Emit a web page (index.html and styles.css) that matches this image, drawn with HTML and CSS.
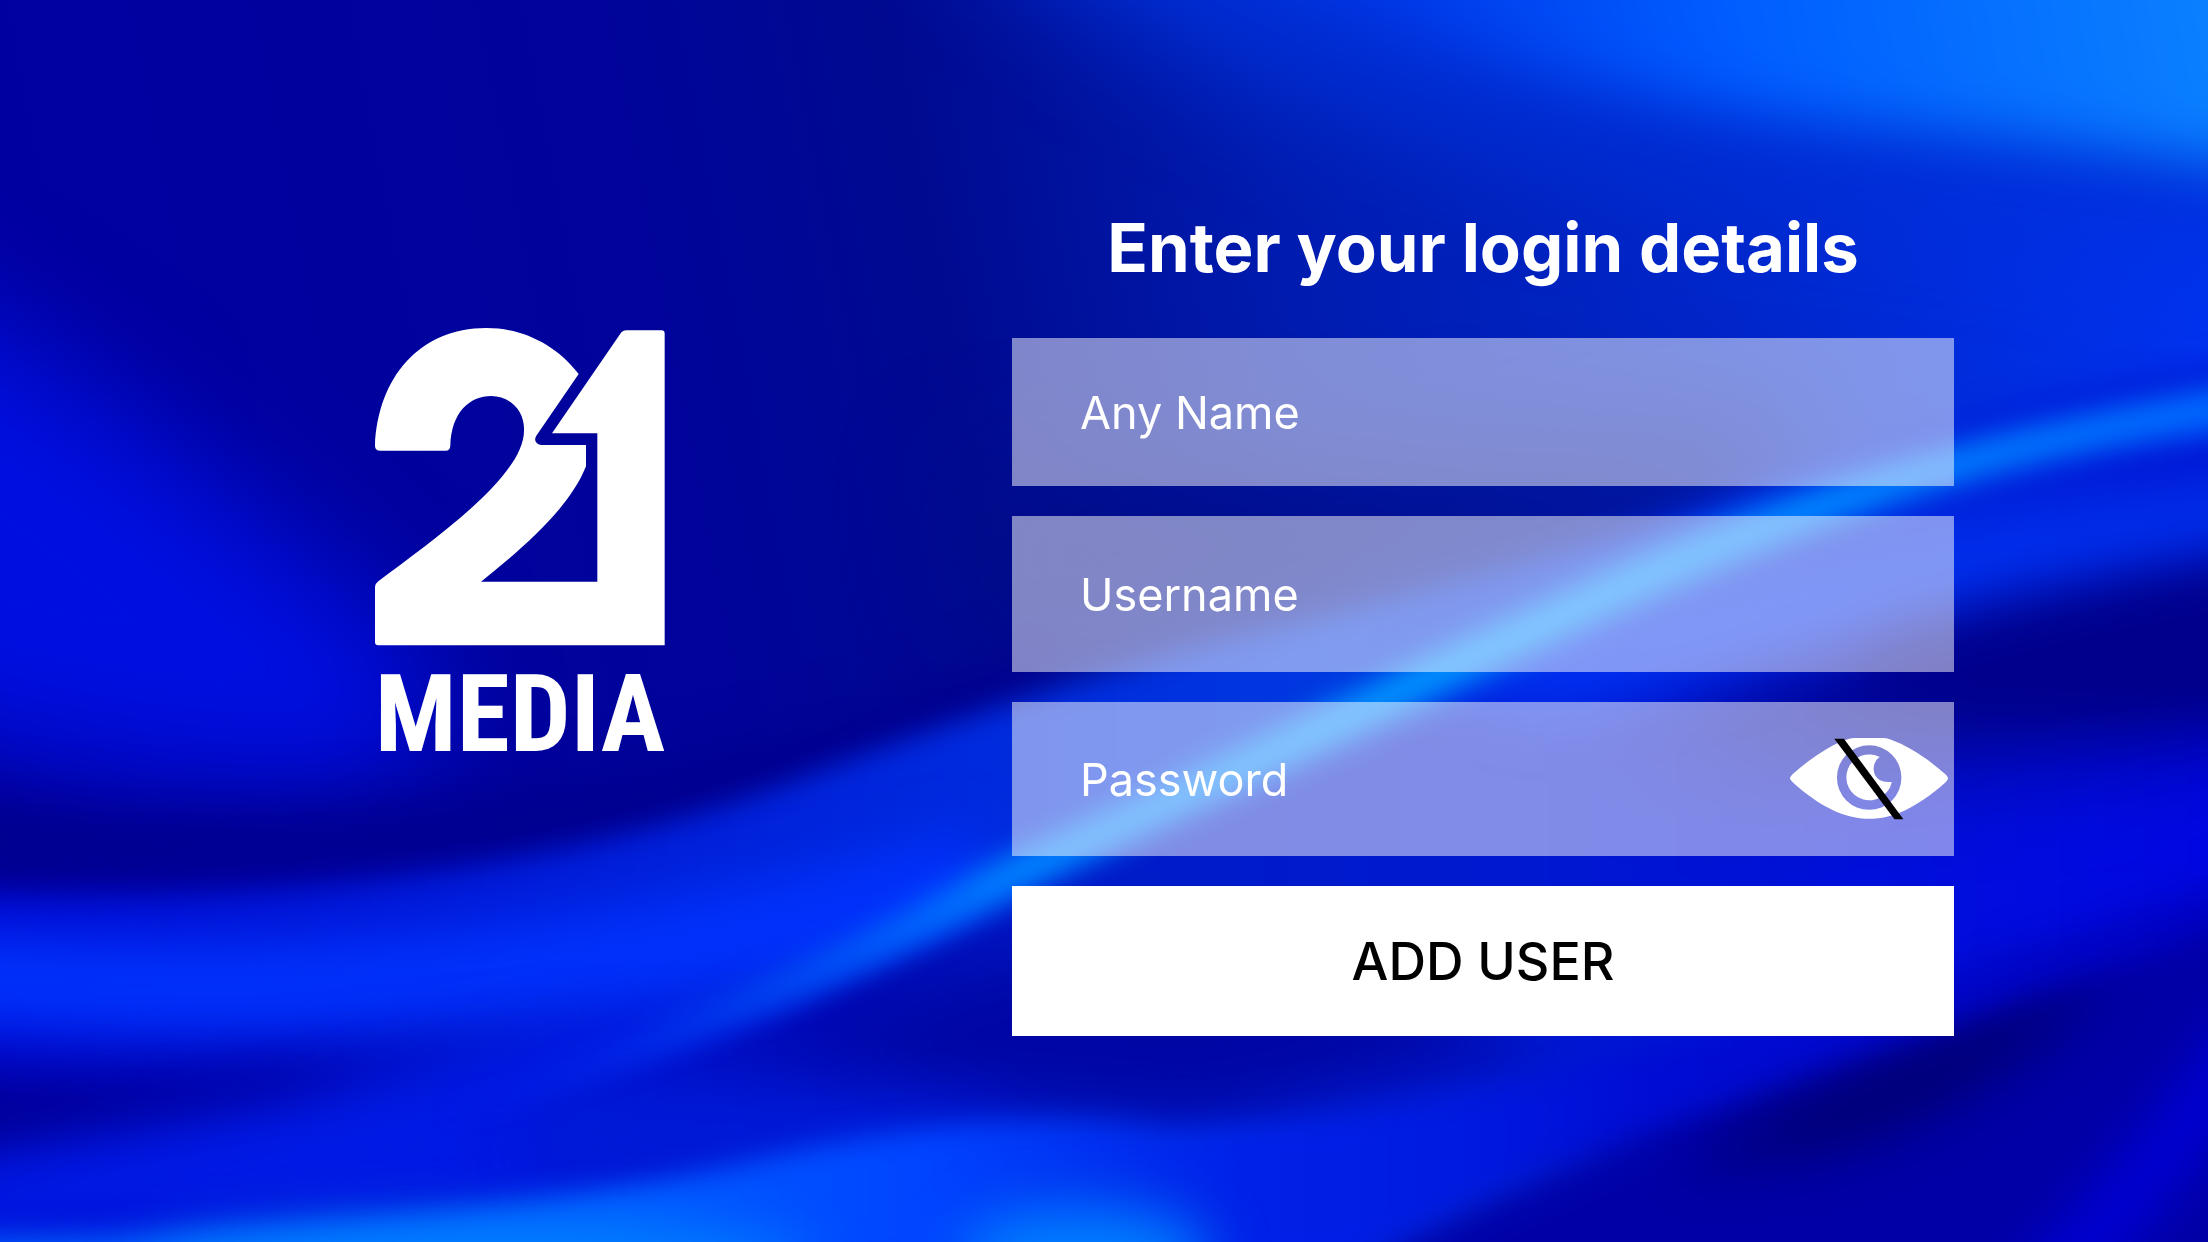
FILE: index.html
```html
<!DOCTYPE html>
<html lang="en">
<head>
<meta charset="utf-8">
<meta name="viewport" content="width=device-width, initial-scale=1">
<title>21 Media – Login</title>
<link rel="stylesheet" href="styles.css">
</head>
<body>
<svg class="backdrop" viewBox="0 0 1568 882" preserveAspectRatio="none" aria-hidden="true">
  <defs>
    <filter id="soft" filterUnits="userSpaceOnUse" x="-300" y="-300" width="2168" height="1482" color-interpolation-filters="sRGB"><feGaussianBlur stdDeviation="10"/></filter>
    <filter id="medium" filterUnits="userSpaceOnUse" x="-300" y="-300" width="2168" height="1482" color-interpolation-filters="sRGB"><feGaussianBlur stdDeviation="20"/></filter>
    <filter id="wide" filterUnits="userSpaceOnUse" x="-300" y="-300" width="2168" height="1482" color-interpolation-filters="sRGB"><feGaussianBlur stdDeviation="42"/></filter>
    <linearGradient id="base" gradientUnits="userSpaceOnUse" x1="0" y1="300" x2="1568" y2="0">
      <stop offset="0" stop-color="#0000a2"/><stop offset=".3" stop-color="#00049a"/><stop offset=".42" stop-color="#000a90"/><stop offset=".58" stop-color="#001cb0"/><stop offset=".75" stop-color="#0026c8"/><stop offset="1" stop-color="#0034f4"/>
    </linearGradient>
    <linearGradient id="corner" gradientUnits="userSpaceOnUse" x1="1000" y1="100" x2="1568" y2="0">
      <stop offset="0" stop-color="#0038e8"/><stop offset=".4" stop-color="#005cff"/><stop offset="1" stop-color="#0a80ff"/>
    </linearGradient>
    <linearGradient id="band" gradientUnits="userSpaceOnUse" x1="0" y1="0" x2="1568" y2="0">
      <stop offset="0" stop-color="#0008d0"/><stop offset=".25" stop-color="#001cd8"/><stop offset=".4" stop-color="#0026dc"/><stop offset=".6" stop-color="#0038e0"/><stop offset="1" stop-color="#0018d8"/>
    </linearGradient>
    <linearGradient id="under" gradientUnits="userSpaceOnUse" x1="360" y1="0" x2="1568" y2="0">
      <stop offset="0" stop-color="#0018e0"/><stop offset=".08" stop-color="#0012cc"/><stop offset=".2" stop-color="#0008b0"/><stop offset=".35" stop-color="#001cc8"/><stop offset=".6" stop-color="#0018d0"/><stop offset="1" stop-color="#0008e4"/>
    </linearGradient>
    <linearGradient id="streak" gradientUnits="userSpaceOnUse" x1="300" y1="0" x2="1568" y2="0">
      <stop offset="0" stop-color="#0028f0" stop-opacity="0"/><stop offset=".16" stop-color="#0048f8" stop-opacity=".7"/><stop offset=".34" stop-color="#0088ff"/><stop offset=".55" stop-color="#0094ff"/><stop offset=".8" stop-color="#0084ff"/><stop offset="1" stop-color="#0068ff"/>
    </linearGradient>
    <linearGradient id="wedge" gradientUnits="userSpaceOnUse" x1="0" y1="0" x2="440" y2="0">
      <stop offset="0" stop-color="#000096"/><stop offset=".45" stop-color="#0000a0"/><stop offset="1" stop-color="#0010c8" stop-opacity="0"/>
    </linearGradient>
    <linearGradient id="floor" gradientUnits="userSpaceOnUse" x1="0" y1="0" x2="1568" y2="0">
      <stop offset="0" stop-color="#0060ff"/><stop offset=".28" stop-color="#005cff"/><stop offset=".42" stop-color="#0044ff"/><stop offset=".5" stop-color="#0030f0"/><stop offset=".56" stop-color="#0022e8"/><stop offset=".66" stop-color="#001ae0"/><stop offset=".75" stop-color="#000cd4"/><stop offset="1" stop-color="#0000c8" stop-opacity=".4"/>
    </linearGradient>
  </defs>
  <rect width="1568" height="882" fill="url(#base)"/>
  <g filter="url(#wide)">
    <path d="M-120 180 C20 230 130 330 260 430 C330 500 340 560 220 560 C80 560 -40 520 -120 500Z" fill="#000fe0"/>
    <path d="M660 -100 C780 40 1000 110 1300 130 L1700 180 V-120Z" fill="#0030d8"/>
    <path d="M680 340 C900 340 1040 340 1300 300 L1200 380 L720 460Z" fill="#000c88"/>
  </g>
  <path d="M820 -90 C940 30 1180 78 1360 92 C1460 102 1560 112 1700 134 V-120Z" fill="url(#corner)" filter="url(#medium)"/>
  <path d="M-80 550 C100 600 300 570 460 550 C560 530 680 490 760 450 L720 520 C560 600 300 640 -80 620Z" fill="#00008e" filter="url(#medium)"/>
  <path d="M-80 632 C200 650 420 610 560 556 C720 494 820 466 920 444 C1120 396 1240 350 1340 312 C1430 284 1500 270 1700 240 V1000 H-80Z" fill="url(#band)" filter="url(#soft)"/>
  <path d="M-80 690 C200 715 420 700 700 622" fill="none" stroke="#0032fc" stroke-width="68" filter="url(#medium)"/>
  <path d="M-80 762 C140 770 300 748 440 712 L420 744 C330 780 160 810 -80 838Z" fill="url(#wedge)" filter="url(#medium)"/>
  <path d="M-80 836 C140 800 260 780 420 730 L640 730 L620 840 L-80 880Z" fill="#001ae4" filter="url(#medium)"/>
  <path d="M330 788 C500 756 640 684 740 630 C880 560 1010 510 1120 470 C1260 430 1400 410 1700 370 V820 H1000 C760 780 520 850 330 830Z" fill="url(#under)" filter="url(#soft)"/>
  <path d="M1180 500 C1330 460 1450 420 1700 380 V500 C1400 530 1300 540 1180 520Z" fill="#000070" filter="url(#wide)"/>
  <g filter="url(#medium)">
    <path d="M1000 485 C1160 425 1330 370 1700 326 V372 C1400 410 1250 480 1100 510Z" fill="#0030f0"/>
    <path d="M1330 450 C1400 430 1450 415 1700 380 V490 C1500 505 1420 500 1330 490Z" fill="#00008c"/>
    <path d="M620 730 C700 680 780 670 900 690 L1100 740 L860 790 C760 790 700 770 620 760Z" fill="#0006a4"/>
    <path d="M400 780 C520 765 660 770 740 790 L600 840 L380 840Z" fill="#001ad8"/>
    <path d="M900 920 C1100 820 1300 730 1700 600 V960 H900Z" fill="#0000a6"/>
    <path d="M1190 830 C1270 770 1420 715 1500 690 C1460 740 1380 800 1290 820Z" fill="#000074"/>
    <path d="M1410 960 C1510 860 1550 800 1640 690" fill="none" stroke="#0000e0" stroke-width="36"/>
  </g>
  <path d="M-80 878 C200 880 380 862 560 818 C680 792 760 790 830 804 C980 796 1200 754 1568 634 L1568 662 C1300 750 1080 820 960 900 H-80Z" fill="url(#floor)" filter="url(#soft)"/>
  <ellipse cx="770" cy="892" rx="90" ry="34" fill="#0080ff" filter="url(#medium)"/>
  <ellipse cx="340" cy="900" rx="240" ry="30" fill="#0084ff" filter="url(#medium)"/>
  <path d="M300 800 C470 730 600 675 700 615 C860 545 980 480 1100 425 C1240 355 1380 310 1620 265 L1620 302 C1460 317 1340 350 1160 430 C1020 494 880 558 740 626 C600 698 440 764 300 800Z" fill="url(#streak)" filter="url(#soft)"/>
</svg>

<main class="screen">
  <section class="brand" aria-label="21 Media">
    <svg class="brand-mark" viewBox="46 52 870 952" aria-hidden="true">
      <path d="M46 405C55 200 180 52 380 52C490 52 590 103 657 190L530 375C520 391 533 403 545 403H679V467C630 590 500 704 364 813H713V368H577L783 68Q789 59 800 59H905Q915 59 915 69V1004H56Q46 1004 46 994V828Q46 820 56 812C220 688 493 498 493 360C496 300 450 256 395 256C330 256 275 305 272 405Q271 420 258 420H62Q46 420 46 405Z"/>
    </svg>
    <p class="brand-name">MEDIA</p>
  </section>

  <form class="login">
    <h1 class="login-title">Enter your login details</h1>
    <input class="field" type="text" name="name" placeholder="Any Name" aria-label="Any Name">
    <input class="field field-username" type="text" name="username" placeholder="Username" aria-label="Username">
    <div class="password">
      <input class="field field-password" type="password" name="password" placeholder="Password" aria-label="Password">
      <button class="reveal" type="button" aria-label="Show password">
        <svg class="reveal-icon" viewBox="60 55 475 244" aria-hidden="true">
          <path fill="#fff" fill-rule="evenodd" d="M60 176Q60 171 70 162C118 119 185 72 238 57Q245 55 255 55H338Q350 55 360 59C420 80 480 122 528 165Q535 171 535 176Q535 181 528 188C440 265 370 298 298 298C225 298 150 262 68 188Q60 181 60 176ZM298 77A97 97 0 1 0 298 271A97 97 0 1 0 298 77Z"/>
          <path fill="#fff" d="M330 112C300 130 303 194 366 187A69 69 0 1 1 330 112Z"/>
          <path d="M193 57H222L401 299H374Z"/>
        </svg>
      </button>
    </div>
    <button class="submit" type="submit">ADD USER</button>
  </form>
</main>
</body>
</html>
```
FILE: styles.css
```css
* {
  box-sizing: border-box;
}

body {
  margin: 0;
  min-height: 100vh;
  background: #0000a0;
  color: #fff;
  font-family: Inter, "Liberation Sans", sans-serif;
}

.backdrop {
  position: fixed;
  inset: 0;
  width: 100%;
  height: 100%;
  z-index: -1;
}

.screen {
  display: grid;
  grid-template-columns: minmax(0, 1fr) minmax(0, 942px);
  align-items: center;
  min-height: 100vh;
  padding: 2px 254px 0 28px;
}

.brand {
  display: flex;
  flex-direction: column;
  align-items: center;
  gap: 28px;
  padding-bottom: 162px;
}

.brand-mark {
  width: 290px;
  fill: #fff;
}

.brand-name {
  margin: 0;
  font-family: "Roboto Condensed", "Open Sans Condensed", Roboto, sans-serif;
  font-size: 108px;
  font-weight: 700;
  line-height: 80px;
}

.login {
  display: flex;
  flex-direction: column;
  gap: 30px;
}

.login-title {
  margin: 0 0 20px;
  font-size: 67px;
  font-weight: 700;
  line-height: 80px;
  text-align: center;
}

.field {
  width: 100%;
  height: 148px;
  padding: 0 68px;
  border: 0;
  border-radius: 0;
  background: rgb(255 255 255 / 50%);
  color: #fff;
  font: 400 45px Inter, "Liberation Sans", sans-serif;
}

.field::placeholder {
  color: #fff;
  opacity: 1;
}

.field-username {
  height: 156px;
}

.password {
  position: relative;
}

.field-password {
  display: block;
  height: 154px;
  padding-right: 180px;
}

.reveal {
  position: absolute;
  top: 0;
  right: 0;
  display: flex;
  align-items: center;
  height: 100%;
  padding: 0 6px;
  border: 0;
  background: none;
  cursor: pointer;
}

.reveal-icon {
  width: 158px;
}

.submit {
  height: 150px;
  border: 0;
  background: #fff;
  color: #000;
  font: 500 52px Inter, "Liberation Sans", sans-serif;
  cursor: pointer;
}
```
